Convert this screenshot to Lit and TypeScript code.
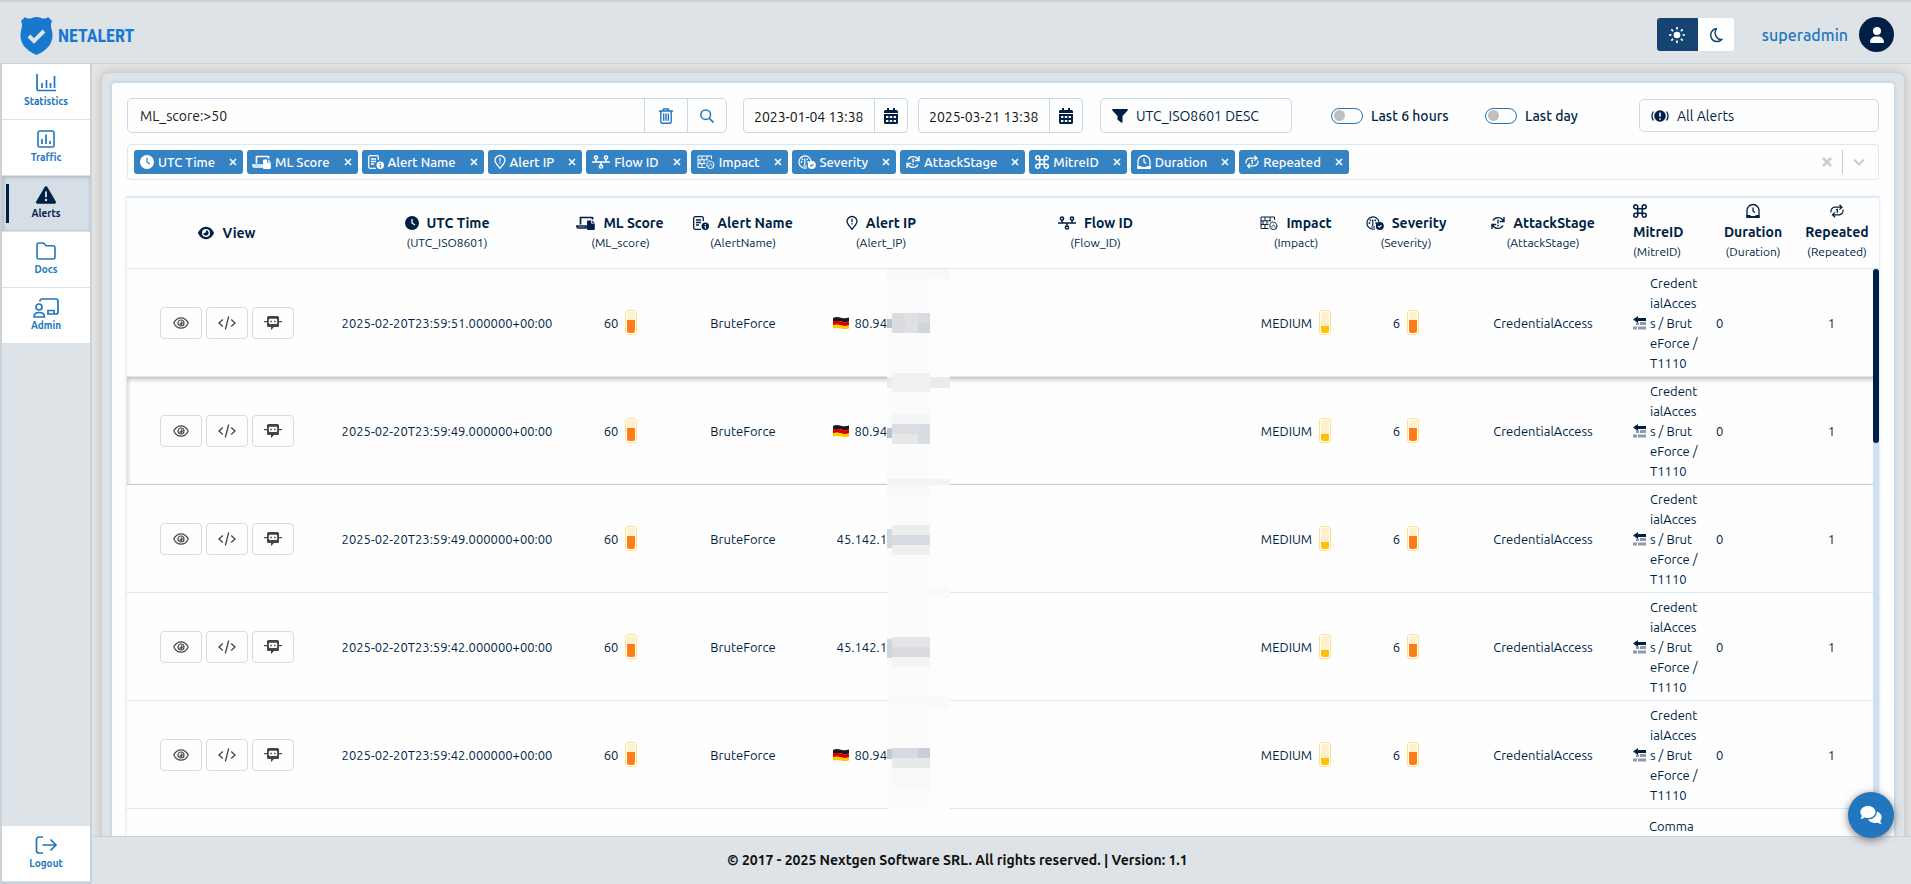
import { LitElement, html, css, svg, nothing } from "lit";
import type { TemplateResult } from "lit";
import { customElement, state } from "lit/decorators.js";
import { classMap } from "lit/directives/class-map.js";

interface Icon { box: string; w: number; h: number; body: TemplateResult; }

const line = (w: number, h: number, body: TemplateResult, box = `0 0 ${w} ${h}`): Icon => ({ box, w, h, body });

const ICONS: Record<string, Icon> = {
  shield: line(33, 38, svg`<path fill="currentColor" d="M5 0c2 2 5 2 7.500.7C13.500.2 15 0 16.500 0s3 .2 4 .7C23 2 26 2 28 0l4 4c-1.700 3-1 6-.2 9 3.200 12-4 20-15.300 25C5.200 33 -2 25 1.200 13 2 10 2.700 7 1 4z"/><path fill="none" stroke="#dee3e7" stroke-width="4" d="M9 19l5 5 10-10"/>`),
  stats: line(20, 18, svg`<path d="M1 0v14.500a2 2 0 0 0 2 2h17M6 14V9M10.500 14V6M14.500 14V9M18.500 14V2" fill="none" stroke="currentColor" stroke-width="1.700"/>`),
  traffic: line(18, 18, svg`<rect x="1" y="1" width="16" height="16" rx="2" fill="none" stroke="currentColor" stroke-width="1.600"/><path d="M5 14V9M9 14V4.500M13 14v-3" fill="none" stroke="currentColor" stroke-width="1.700"/>`),
  warning: line(20, 18, svg`<path fill="currentColor" d="M256 32c14.200 0 27.300 7.500 34.500 19.800l216 368c7.300 12.400 7.300 27.700 .2 40.100S486.300 480 472 480L40 480c-14.300 0-27.600-7.700-34.700-20.100s-7-27.800 .2-40.100l216-368C228.700 39.500 241.800 32 256 32zm0 128c-13.300 0-24 10.700-24 24l0 112c0 13.300 10.700 24 24 24s24-10.700 24-24l0-112c0-13.300-10.700-24-24-24zm32 224a32 32 0 1 0 -64 0 32 32 0 1 0 64 0z"/>`, "0 32 512 448"),
  folder: line(20, 18, svg`<path d="M1 3a2 2 0 0 1 2-2h4.500l2.500 2.700h7a2 2 0 0 1 2 2V15a2 2 0 0 1-2 2H3a2 2 0 0 1-2-2z" fill="none" stroke="currentColor" stroke-width="1.600"/>`),
  admin: line(26, 20, svg`<g fill="none" stroke="currentColor" stroke-width="1.700"><circle cx="6" cy="9" r="3"/><path d="M1 19c0-3 1.500-4.500 5-4.500s5.500 1.500 5.500 4.500zM7 3.500V3a2 2 0 0 1 2-2h14a2 2 0 0 1 2 2v11a2 2 0 0 1-2 2h-9M15 16v-3.500h6V16"/></g>`),
  logout: line(22, 18, svg`<path d="M8 1H4a2.500 2.500 0 0 0-2.500 2.500v11A2.500 2.500 0 0 0 4 17h4M7.500 9H21M15.500 3.500L21 9l-5.500 5.500" fill="none" stroke="currentColor" stroke-width="1.700"/>`),
  sun: line(16, 16, svg`<circle cx="8" cy="8" r="3.300" fill="currentColor"/><path d="M8 0v2.500M8 13.500V16M0 8h2.500M13.500 8H16M2.300 2.300l1.800 1.800M11.900 11.900l1.800 1.800M2.300 13.700l1.800-1.800M11.900 4.100l1.800-1.800" stroke="currentColor" stroke-width="1.700"/>`),
  moon: line(14, 14, svg`<path d="M7.500.8A6.400 6.400 0 1 0 13 11.200 4.500 4.500 0 0 1 8 9.500C5.500 7 5.500 3 7.500.8z" fill="none" stroke="currentColor" stroke-width="1.500" stroke-linejoin="round"/>`),
  user: line(14, 16, svg`<path fill="currentColor" d="M224 256A128 128 0 1 0 224 0a128 128 0 1 0 0 256zm-45.700 48C79.800 304 0 383.800 0 482.300C0 498.700 13.300 512 29.700 512l388.600 0c16.400 0 29.700-13.300 29.700-29.700C448 383.800 368.200 304 269.700 304l-91.400 0z"/>`, "0 0 448 512"),
  trash: line(14, 16, svg`<path d="M0 3h14M4.500 3V1h5v2M1.800 3v10.700A1.500 1.500 0 0 0 3.300 15.200h7.400a1.500 1.500 0 0 0 1.500-1.500V3M4.700 5.500v7.300M7 5.500v7.300M9.300 5.500v7.300" fill="none" stroke="currentColor" stroke-width="1.400"/>`),
  search: line(14, 14, svg`<circle cx="5.700" cy="5.700" r="4.800" fill="none" stroke="currentColor" stroke-width="1.500"/><path d="M9.300 9.300L13.500 13.500" stroke="currentColor" stroke-width="1.700"/>`),
  calendar: line(14, 16, svg`<path fill="currentColor" d="M3 0h2v2h4V0h2v2h1.500A1.500 1.500 0 0 1 14 3.500V5H0V3.500A1.500 1.500 0 0 1 1.500 2H3zM0 6h14v8.500a1.500 1.500 0 0 1-1.500 1.500h-11A1.500 1.500 0 0 1 0 14.500z"/><path fill="#fff" d="M2 8h2.400v2H2zM5.800 8h2.400v2H5.800zM9.600 8H12v2H9.600zM2 12h2.400v2H2zM5.800 12h2.400v2H5.800zM9.600 12H12v2H9.600z"/>`),
  funnel: line(16, 14, svg`<path fill="currentColor" d="M.8 0h14.400a.8.8 0 0 1 .6 1.300L10.500 7v6.200a.6.600 0 0 1-1 .5L5.900 11a1 1 0 0 1-.4-.8V7L.2 1.300A.8.800 0 0 1 .8 0z"/>`),
  alertAll: line(18, 14, svg`<circle cx="9" cy="7" r="5.800" fill="currentColor"/><path d="M9 3.500v4.300M9 9.200v1.600" stroke="#fff" stroke-width="1.500"/><path d="M2.500 2.500a8 8 0 0 0 0 9M15.500 2.500a8 8 0 0 1 0 9" fill="none" stroke="currentColor" stroke-width="1.300"/>`),
  eyeSolid: line(16, 14, svg`<path fill="currentColor" d="M288 32c-80.800 0-145.500 36.800-192.600 80.600C48.600 156 17.300 208 2.500 243.700c-3.300 7.900-3.300 16.700 0 24.600C17.300 304 48.600 356 95.400 399.400C142.500 443.200 207.200 480 288 480s145.500-36.800 192.600-80.600c46.800-43.500 78.100-95.400 93-131.100c3.300-7.900 3.300-16.700 0-24.600c-14.900-35.700-46.200-87.700-93-131.100C433.500 68.800 368.800 32 288 32zM144 256a144 144 0 1 1 288 0 144 144 0 1 1 -288 0zm144-64c0 35.300-28.700 64-64 64c-7.100 0-13.900-1.200-20.300-3.300c-5.500-1.800-11.900 1.600-11.700 7.400c.3 6.900 1.300 13.800 3.200 20.700c13.700 51.200 66.400 81.600 117.600 67.900s81.600-66.400 67.900-117.600c-11.100-41.500-47.800-69.400-88.600-71.100c-5.800-.2-9.200 6.100-7.400 11.700c2.100 6.400 3.300 13.200 3.300 20.300z"/>`, "0 32 576 448"),
  eye: line(16, 12, svg`<g fill="none" stroke="currentColor" stroke-width="1.200"><path d="M.8 6C2.500 2.500 5 .8 8 .8s5.500 1.700 7.200 5.200C13.500 9.500 11 11.200 8 11.200S2.500 9.500.8 6z"/><circle cx="8" cy="6" r="3"/></g><path d="M7.800 4.200a1.900 1.900 0 1 1-1.700 2.600c1 .2 2-.8 1.700-2.600z" fill="currentColor"/>`),
  code: line(18, 14, svg`<path d="M4.800 3.500L1 7l3.800 3.500M13.200 3.500L17 7l-3.800 3.500M10.700.5L7.300 13.500" fill="none" stroke="currentColor" stroke-width="1.300"/>`),
  bot: line(18, 14, svg`<path fill="currentColor" d="M4.500 0h9A1.500 1.500 0 0 1 15 1.500V5h3v1.300h-3V9.500a1.500 1.500 0 0 1-1.500 1.500H10l-3 3v-3H4.500A1.500 1.500 0 0 1 3 9.500V6.300H0V5h3V1.500A1.500 1.500 0 0 1 4.500 0z"/><rect x="4.800" y="2.800" width="8.400" height="5.200" rx="1.200" fill="#fff"/><path d="M6.300 4.700h1.500v1.500H6.300zM10.200 4.700h1.500v1.500h-1.500z" fill="currentColor"/>`),
  clock: line(14, 14, svg`<path fill="currentColor" d="M256 0a256 256 0 1 1 0 512A256 256 0 1 1 256 0zM232 120l0 136c0 8 4 15.500 10.700 20l96 64c11 7.400 25.900 4.400 33.300-6.700s4.400-25.900-6.700-33.300L280 243.200 280 120c0-13.300-10.700-24-24-24s-24 10.700-24 24z"/>`, "0 0 512 512"),
  score: line(18, 14, svg`<path d="M3.500 8.500V1.500h12M0 10h9v2H1.500A1.500 1.500 0 0 1 0 10.500zM15.500 1v2.500" fill="none" stroke="currentColor" stroke-width="1.700"/><path fill="currentColor" d="M11 4.500h3.200v3h3.600v5.500a1 1 0 0 1-1 1H11a1 1 0 0 1-1-1V5.500a1 1 0 0 1 1-1zM15.200 4.300l2.500 2.400h-2.500z"/>`),
  name: line(16, 14, svg`<path d="M8 13.300H2.200A1.500 1.500 0 0 1 .7 11.800V2.200A1.500 1.500 0 0 1 2.200.7h6.600a1.500 1.500 0 0 1 1.500 1.500V5M3 4h5M3 6.500h5M3 9h3" fill="none" stroke="currentColor" stroke-width="1.300"/><circle cx="12.300" cy="10.200" r="3.700" fill="currentColor"/><path d="M12.300 8v1M12.300 9.800v2.600" stroke="var(--hole,#fff)" stroke-width="1.200"/>`),
  ip: line(12, 14, svg`<path d="M6 13.300C3 9.500 1 7.600 1 5.500a5 5 0 0 1 10 0c0 2.100-2 4-5 7.800z" fill="none" stroke="currentColor" stroke-width="1.300"/><path d="M6 2.800v3.500M6 7.300v1.300" stroke="currentColor" stroke-width="1.300"/>`),
  flow: line(18, 14, svg`<g fill="none" stroke="currentColor" stroke-width="1.500"><circle cx="4" cy="2.500" r="1.600"/><circle cx="14" cy="2.500" r="1.600"/><circle cx="9" cy="11.500" r="1.600"/><path d="M0 7h18M4 4v3M14 4v3M9 7v3"/></g>`),
  impact: line(18, 14, svg`<g fill="none" stroke="currentColor" stroke-width="1"><path d="M8.500 12.500H1V1h13.500v3M1 4.800h10M1 8.600h7.500M5 1v3.800M10 1v3.800M3 4.800v3.800M7 4.800v3.800M5 8.600v3.900"/><path d="M13.500 13.500a3.600 3.600 0 0 1-3.700-3.700c0-1.500 1.200-2.800 2.200-4.300l1.500 1.300 1-.8c1.500 1.500 2.500 2.700 2.500 4.100a3.400 3.400 0 0 1-3.500 3.400zM11.800 11.500c0-1.200.7-1.800 1.700-2.500 1 .7 1.700 1.500 1.700 2.500"/></g>`),
  severity: line(18, 14, svg`<g fill="none" stroke="currentColor" stroke-width="1.200"><path d="M9 12.800A6.100 6.100 0 1 1 13 6M6.800 3.500V10M5 11h4"/></g><g fill="currentColor"><circle cx="3.500" cy="7" r=".9"/><circle cx="4.500" cy="4.300" r=".9"/><circle cx="9.300" cy="4.300" r=".9"/><circle cx="10.200" cy="7" r=".9"/><circle cx="13.800" cy="10" r="4"/></g><path d="M12.300 10l1.200 1.200 2-2.200" fill="none" stroke="var(--hole,#fff)" stroke-width="1.100"/>`),
  stage: line(14, 14, svg`<g fill="none" stroke="currentColor" stroke-width="1.400"><path d="M12.500 5.500A5.800 5.800 0 0 0 2 4.500M1.500 8.500A5.800 5.800 0 0 0 12 9.500M13 1v4.500H8.800M1 13V8.500h4.200M7 3.800v3.800M7 8.800v1.500"/></g>`),
  mitre: line(14, 14, svg`<path d="M4.700 4.700h4.600v4.600H4.700zM4.700 4.700H3a2 2 0 1 1 1.700-2zM9.300 4.700V3a2 2 0 1 1 1.700 1.700zM9.300 9.300H11a2 2 0 1 1-1.700 2zM4.700 9.300V11A2 2 0 1 1 3 9.300z" fill="none" stroke="currentColor" stroke-width="1.600"/>`),
  duration: line(14, 14, svg`<path d="M1 13V6.500a6 6 0 0 1 12 0V13z" fill="none" stroke="currentColor" stroke-width="1.300"/><path d="M.5 11h3.200a5.500 5.500 0 0 0 6.600 0h3.200v3H.5z" fill="currentColor"/><path d="M7 3.500V7l2 1.500" fill="none" stroke="currentColor" stroke-width="1.300"/>`),
  repeat: line(14, 14, svg`<path d="M1 8.500A4.300 4.300 0 0 1 4.500 3.200H12M9.500.8L12 3.200 9.500 5.600M13 5.500a4.300 4.300 0 0 1-3.500 5.300H2.500M5 8.400L2.500 10.800 5 13.200M6 5.800l1.300-.5V9" fill="none" stroke="currentColor" stroke-width="1.200"/>`),
  tactic: line(14, 14, svg`<path fill="currentColor" d="M0 3.500L5 0v2h8v3H5v2z"/><path fill="currentColor" opacity=".45" d="M7 6h6v3H7zM3 6.500h3v2.500H3zM0 10.500h4v3H0zM5 10.500h8v3H5z"/>`),
  chat: line(22, 18, svg`<path fill="currentColor" d="M8 0c4.200 0 7.500 2.700 7.500 6S12.200 12 8 12c-1.200 0-2.300-.2-3.300-.6-1 .8-2.500 1.400-4.400 1.400C1.200 11.800 1.700 10.700 1.800 9.700.9 8.700.4 7.400.4 6 .4 2.700 3.800 0 8 0z"/><path fill="currentColor" d="M16.800 5.500c2.900.8 4.900 3 4.900 5.700 0 1.400-.5 2.600-1.400 3.600 0 1 .6 2 1.500 3-1.900 0-3.400-.6-4.500-1.400-1 .4-2 .5-3.100.5-2.700 0-5-1.300-6.200-3.300 5 0 8.900-3.500 8.900-7.500z"/>`),
  flag: line(16, 12, svg`<path d="M0 1C3-.3 5 0 8 .8S13 1.500 16 .5V4.500c-3 1-5 .7-8 0S3 3.800 0 4.800z" fill="#1a1a1a"/><path d="M0 4.500c3-1 5-.8 8 0s5 1 8 0v4c-3 1-5 .8-8 0s-5-1-8 0z" fill="#d80000"/><path d="M0 8.300c3-1 5-.8 8 0s5 1 8 0v3.200c-3 1-5 .6-8 0s-5-.8-8 .2z" fill="#fc0"/>`),
  cross: line(8, 8, svg`<path d="M1 1l6 6M7 1L1 7" stroke="currentColor" stroke-width="1.600"/>`),
  clear: line(10, 10, svg`<path d="M1 1l8 8M9 1L1 9" stroke="currentColor" stroke-width="2.500"/>`),
  chevron: line(12, 8, svg`<path d="M1 1.500l5 5 5-5" fill="none" stroke="currentColor" stroke-width="2"/>`),
};

const icon = (name: string) => {
  const i = ICONS[name];
  return html`<svg class="icon" width=${i.w} height=${i.h} viewBox=${i.box} aria-hidden="true">${i.body}</svg>`;
};

interface Column { icon: string; title: string; field?: string; cls: string; }

const COLUMNS: Column[] = [
  { icon: "eyeSolid", title: "View", cls: "c-view" },
  { icon: "clock", title: "UTC Time", field: "UTC_ISO8601", cls: "c-time" },
  { icon: "score", title: "ML Score", field: "ML_score", cls: "c-score" },
  { icon: "name", title: "Alert Name", field: "AlertName", cls: "c-name" },
  { icon: "ip", title: "Alert IP", field: "Alert_IP", cls: "c-ip" },
  { icon: "flow", title: "Flow ID", field: "Flow_ID", cls: "c-flow" },
  { icon: "impact", title: "Impact", field: "Impact", cls: "c-level" },
  { icon: "severity", title: "Severity", field: "Severity", cls: "c-level" },
  { icon: "stage", title: "AttackStage", field: "AttackStage", cls: "c-stage" },
  { icon: "mitre", title: "MitreID", field: "MitreID", cls: "c-mitre" },
  { icon: "duration", title: "Duration", field: "Duration", cls: "c-duration" },
  { icon: "repeat", title: "Repeated", field: "Repeated", cls: "c-repeated" },
];

type Block = [x: number, y: number, w: number, h: number, fill: string];
interface Alert { time: string; ip: string; german: boolean; hover?: boolean; mask: Block[]; }

const BRUTE = ["Credent", "ialAcces", "s / Brut", "eForce /", "T1110"];

const ALERTS: Alert[] = [
  { time: "2025-02-20T23:59:51.000000+00:00", ip: "80.94", german: true,
    mask: [[0, 0, 63, 10, "#f7f8f9"], [0, 50, 5, 9, "#bcc1cc"], [5, 44, 13, 20, "#dadce1"], [18, 44, 13, 20, "#dfe0e3"], [31, 44, 12, 10, "#d9dbe1"], [31, 54, 12, 10, "#d0d4dd"], [5, 104, 38, 5, "#f1f1f1"]] },
  { time: "2025-02-20T23:59:49.000000+00:00", ip: "80.94", german: true, hover: true,
    mask: [[0, 0, 63, 11, "#ebebeb"], [5, 0, 38, 15, "#f1f1f1"], [0, 51, 5, 10, "#bdc3ce"], [5, 37, 38, 10, "#f4f5f7"], [5, 47, 26, 10, "#dbdde2"], [31, 47, 12, 20, "#d8dce3"], [5, 57, 26, 10, "#e7e7ea"], [0, 102, 63, 7, "#f4f4f5"]] },
  { time: "2025-02-20T23:59:49.000000+00:00", ip: "45.142.1", german: false,
    mask: [[0, 0, 43, 10, "#f7f8f8"], [0, 44, 5, 19, "#d5d7dc"], [5, 40, 38, 10, "#ededf0"], [5, 50, 38, 10, "#d8dbe2"], [5, 60, 38, 10, "#eff0f1"], [0, 103, 63, 6, "#f9fafc"]] },
  { time: "2025-02-20T23:59:42.000000+00:00", ip: "45.142.1", german: false,
    mask: [[0, 0, 63, 5, "#f9fafc"], [0, 46, 5, 19, "#d3d5db"], [5, 44, 38, 10, "#e3e4e8"], [5, 54, 38, 10, "#dadbe1"], [5, 64, 38, 10, "#f4f4f6"], [0, 103, 63, 6, "#f9fafc"]] },
  { time: "2025-02-20T23:59:42.000000+00:00", ip: "80.94", german: true,
    mask: [[0, 0, 63, 7, "#f9fafc"], [0, 48, 5, 10, "#c3c8d2"], [5, 47, 26, 10, "#d6d9e0"], [31, 47, 12, 10, "#c8ced9"], [5, 57, 38, 10, "#e7e9eb"], [5, 67, 38, 20, "#f9f9f9"]] },
];

const NAV = [
  { icon: "stats", label: "Statistics" },
  { icon: "traffic", label: "Traffic" },
  { icon: "warning", label: "Alerts" },
  { icon: "folder", label: "Docs" },
  { icon: "admin", label: "Admin" },
];

@customElement("app-root")
export class AppRoot extends LitElement {
  @state() private active = "Alerts";
  @state() private tags = COLUMNS.filter((c) => c.field);

  static styles = css`
    :host {
      --navy: #001f45; --blue: #2176bd; --panel: #dee3e7; --edge: #c8d2da; --rule: #d8e8f4; --ring: #c3d9ec;
      display: flex; flex-direction: column; height: 100vh; overflow: hidden;
      font-family: Ubuntu, "Noto Sans", sans-serif; font-size: 13px; line-height: 20px; color: var(--navy);
      background: #e6e6e6;
    }
    * { box-sizing: border-box; }
    button, input, select { font: inherit; color: inherit; margin: 0; }
    button { cursor: pointer; padding: 0; border: 0; background: none; display: flex; align-items: center; justify-content: center; }
    .icon { display: block; flex: none; overflow: visible; }

    .top { flex: none; height: 64px; display: flex; align-items: center; justify-content: space-between; padding: 4px 17px 0 20px; background: var(--panel); border-top: 2px solid #cdcfd0; border-bottom: 1px solid var(--edge); }
    .brand { display: flex; align-items: center; gap: 5px; padding-top: 2px; color: #1878d0; text-decoration: none; font-family: "Ubuntu Condensed", "Roboto Condensed", "Open Sans Condensed", Ubuntu, sans-serif; font-size: 18px; font-weight: 700; line-height: 24px; }
    .account { display: flex; align-items: center; }
    .theme { display: flex; border-radius: 3px; overflow: hidden; background: #fff; margin-right: 28px; }
    .theme button { width: 36px; height: 33px; color: #154472; }
    .theme .on { width: 41px; background: #154472; color: #fff; }
    .who { color: var(--blue); font-size: 16px; font-weight: 500; text-decoration: none; margin-right: 11px; }
    .avatar { width: 35px; height: 35px; border-radius: 50%; background: var(--navy); color: #fff; }

    .body { flex: 1; min-height: 0; display: flex; }
    .side { flex: none; width: 92px; display: flex; flex-direction: column; justify-content: space-between; background: var(--panel); border: 2px solid var(--edge); border-top: 0; }
    .nav { display: flex; flex-direction: column; }
    .item { height: 56px; display: flex; flex-direction: column; align-items: center; justify-content: space-between; padding: 10px 0 9px; background: #fff; border-bottom: 1px solid #dfe2e5; color: var(--blue); font-size: 10px; font-weight: 700; line-height: 16px; text-decoration: none; position: relative; }
    .item.current { background: #d6dee6; color: var(--navy); box-shadow: inset 1px 1px 4px #a9b2bc; }
    .item.current::before { content: ""; position: absolute; left: 4px; top: 8px; bottom: 8px; width: 3px; background: var(--navy); }

    .main { flex: 1; min-width: 0; display: flex; flex-direction: column; }
    .stage { flex: 1; min-height: 0; overflow: hidden; padding: 8px 6px 0 9px; }
    .frame { height: calc(100% + 40px); padding: 9px; background: var(--panel); border: 1px solid var(--edge); border-radius: 8px; box-shadow: 0 0 12px #bdbdbd; }
    .card { height: 100%; padding: 15px; background: #fefefe; border: 1px solid var(--ring); border-radius: 4px; box-shadow: 0 0 3px #b4cee4; display: flex; flex-direction: column; }
    .foot { flex: none; height: 48px; display: flex; align-items: center; justify-content: center; padding: 0 88px 2px 0; background: var(--panel); border-top: 1px solid var(--edge); font-size: 14px; font-weight: 700; color: #111; }

    .filters { display: flex; align-items: center; }
    .query { flex: 1; min-width: 160px; display: flex; height: 35px; border: 1px solid var(--ring); border-radius: 5px; overflow: hidden; }
    .query input { flex: 1; min-width: 0; border: 0; padding: 0 12px; background: none; font-size: 14px; color: #222; }
    .query button { width: 43px; border-left: 1px solid var(--ring); color: var(--blue); }
    .query button:last-child { width: 39px; }
    .dates { display: flex; gap: 10px; margin: 0 17px 0 16px; }
    .date { display: flex; width: 165px; height: 35px; border: 1px solid var(--ring); border-radius: 4px; }
    .date input { flex: 1; min-width: 0; border: 0; padding: 2px 0 0 10px; background: none; font-size: 14px; color: #111; }
    .date button { width: 33px; border-left: 1px solid var(--ring); color: var(--navy); }
    .pick { display: flex; align-items: center; height: 35px; border: 1px solid var(--ring); border-radius: 5px; padding-left: 11px; }
    .pick select { flex: 1; min-width: 0; height: 100%; border: 0; background: none; appearance: none; padding: 0 8px; font-size: 14px; }
    .sort { width: 192px; margin-right: 39px; }
    .scope { width: 240px; height: 33px; border-color: #ced8e2; }
    .toggle { width: 154px; display: flex; align-items: center; gap: 8px; font-size: 14px; font-weight: 500; }
    .toggle input { appearance: none; width: 32px; height: 16px; border: 1px solid var(--blue); border-radius: 8px; padding: 2px; display: flex; align-items: center; }
    .toggle input::before { content: ""; width: 11px; height: 11px; border-radius: 50%; background: #bfbfbf; }
    .toggle input:checked { justify-content: flex-end; }

    .tagbox { display: flex; align-items: center; justify-content: space-between; margin-top: 11px; min-height: 36px; padding: 5px 0 5px 6px; border: 1px solid var(--rule); border-radius: 4px; }
    .tags { display: flex; flex-wrap: wrap; gap: 4px; list-style: none; margin: 0; padding: 0; }
    .tag { --hole: #3683c3; display: flex; align-items: center; gap: 4px; height: 24px; padding-left: 6px; border-radius: 3px; background: #3683c3; color: #fff; font-weight: 500; }
    .tag button { width: 24px; height: 24px; padding-left: 4px; }
    .tools { display: flex; align-items: center; color: #ccc; }
    .tools button { width: 30px; height: 24px; }
    .tools button + button { width: 36px; padding-right: 4px; border-left: 1px solid #ccc; }

    .grid { flex: 1; min-height: 0; overflow: hidden; position: relative; margin-top: 17px; border-top: 1px solid var(--rule); box-shadow: 0 0 0 1px #e2eef8, 0 0 4px #cfe2f2; }
    table { width: 100%; border-collapse: separate; border-spacing: 0; table-layout: fixed; text-align: center; }
    th, td { padding: 4px 0; border-bottom: 1px solid var(--rule); }
    th { height: 71px; padding: 0; font-size: 14px; font-weight: 700; }
    .head { display: flex; align-items: center; justify-content: center; gap: 8px; }
    .field { display: block; font-size: 12px; font-weight: 400; }
    .c-view { width: 200px; } .c-time { width: 240px; } .c-score { width: 107px; } .c-name { width: 138px; } .c-ip { width: 138px; }
    .c-level { width: 110px; } .c-stage { width: 164px; } .c-mitre { width: 86px; } .c-duration { width: 84px; } .c-repeated { width: 84px; }
    .c-mitre .head, .c-duration .head, .c-repeated .head { flex-direction: column; gap: 4px; }
    th.c-mitre { text-align: left; padding-left: 8px; }
    .c-mitre .head { align-items: flex-start; }
    tr { position: relative; }
    tr.hover { box-shadow: inset 0 2px 5px #b5b5b5; }
    tr.hover td { border-bottom-color: #bccddb; }
    .acts { display: flex; justify-content: center; gap: 4px; }
    .acts button { width: 42px; height: 32px; border: 1px solid #d7dbe4; border-radius: 4px; color: #444; background: #fefefe; }
    .meter { display: flex; align-items: center; justify-content: center; gap: 7px; }
    .tube { width: 12px; height: 25px; padding: 1px; border: 1px solid #ffe08c; border-radius: 3px; display: flex; }
    .tube i { flex: 1; border-radius: 2px; background: linear-gradient(to top, #fd7e14 60%, #fff0cb 60%); }
    .tube.low i { background: linear-gradient(to top, #ffc107 32%, #fff0cb 32%); }
    td.c-ip { position: relative; padding: 0 63px 0 0; }
    .addr { display: flex; align-items: center; justify-content: flex-end; gap: 5px; }
    .mask { position: absolute; right: 0; top: 0; }
    .tech { display: flex; align-items: center; gap: 3px; padding-left: 8px; text-align: left; white-space: nowrap; height: 99px; }
    .next { padding: 7px 0 0 24px; text-align: left; vertical-align: top; height: 108px; }
    td.c-duration { text-align: left; padding-left: 5px; }
    td.c-repeated { padding-right: 11px; }
    .track { position: absolute; right: 0; top: 71px; bottom: 0; width: 6px; background: #cfe0f0; border-radius: 3px; }
    .thumb { height: 174px; border-radius: 3px; background: var(--navy); }
    .chat { position: fixed; right: 17px; bottom: 46px; width: 46px; height: 46px; border-radius: 50%; background: var(--blue); color: #fff; box-shadow: 0 2px 8px #777; }
  `;

  private navItem(i: { icon: string; label: string }) {
    const current = i.label === this.active;
    return html`<a class=${classMap({ item: true, current })} href="#${i.label.toLowerCase()}"
      aria-current=${current ? "page" : nothing} @click=${() => (this.active = i.label)}>${icon(i.icon)}<span>${i.label}</span></a>`;
  }

  private tag(c: Column) {
    return html`<li class="tag">${icon(c.icon)}<span>${c.title}</span>
      <button aria-label="Remove ${c.title}" @click=${() => (this.tags = this.tags.filter((t) => t !== c))}>${icon("cross")}</button></li>`;
  }

  private date(label: string, value: string) {
    return html`<div class="date"><input type="text" aria-label=${label} .value=${value}><button aria-label="Open ${label} calendar">${icon("calendar")}</button></div>`;
  }

  private row(a: Alert) {
    return html`<tr class=${a.hover ? "hover" : ""}>
      <td><div class="acts"><button aria-label="View">${icon("eye")}</button><button aria-label="Source">${icon("code")}</button><button aria-label="Assistant">${icon("bot")}</button></div></td>
      <td>${a.time}</td>
      <td><div class="meter">60<span class="tube"><i></i></span></div></td>
      <td>BruteForce</td>
      <td class="c-ip"><div class="addr">${a.german ? icon("flag") : nothing}<span>${a.ip}</span></div>
        <svg class="mask" width="63" height="108" aria-hidden="true"><path d="M0 0h63v109H0z" fill="#fdfdfd"/><path d="M0 0h43v109H0z" fill="#fbfbfb"/>${a.mask.map(([x, y, w, h, f]) => svg`<rect x=${x} y=${y} width=${w} height=${h} fill=${f}/>`)}</svg></td>
      <td></td>
      <td><div class="meter">MEDIUM<span class="tube low"><i></i></span></div></td>
      <td><div class="meter">6<span class="tube"><i></i></span></div></td>
      <td>CredentialAccess</td>
      <td class="c-mitre"><div class="tech">${icon("tactic")}<span>${BRUTE.map((l, n) => html`${n ? html`<br>` : nothing}${l}`)}</span></div></td>
      <td class="c-duration">0</td>
      <td class="c-repeated">1</td>
    </tr>`;
  }

  render() {
    return html`
      <header class="top">
        <a class="brand" href="#home">${icon("shield")}<span>NETALERT</span></a>
        <div class="account">
          <div class="theme"><button class="on" aria-label="Light theme">${icon("sun")}</button><button aria-label="Dark theme">${icon("moon")}</button></div>
          <a class="who" href="#profile">superadmin</a>
          <button class="avatar" aria-label="Account">${icon("user")}</button>
        </div>
      </header>
      <div class="body">
        <nav class="side">
          <div class="nav">${NAV.map((i) => this.navItem(i))}</div>
          ${this.navItem({ icon: "logout", label: "Logout" })}
        </nav>
        <div class="main">
          <main class="stage"><div class="frame"><section class="card">
            <div class="filters">
              <div class="query"><input type="text" aria-label="Query" value="ML_score:>50"><button aria-label="Clear query">${icon("trash")}</button><button aria-label="Search">${icon("search")}</button></div>
              <div class="dates">${this.date("From", "2023-01-04 13:38")}${this.date("To", "2025-03-21 13:38")}</div>
              <div class="pick sort">${icon("funnel")}<select aria-label="Sort"><option>UTC_ISO8601 DESC</option></select></div>
              <label class="toggle"><input type="checkbox" role="switch">Last 6 hours</label>
              <label class="toggle"><input type="checkbox" role="switch">Last day</label>
              <div class="pick scope">${icon("alertAll")}<select aria-label="Alert scope"><option>All Alerts</option></select></div>
            </div>
            <div class="tagbox">
              <ul class="tags">${this.tags.map((c) => this.tag(c))}</ul>
              <div class="tools"><button aria-label="Clear columns" @click=${() => (this.tags = [])}>${icon("clear")}</button><button aria-label="Choose columns">${icon("chevron")}</button></div>
            </div>
            <div class="grid">
              <table>
                <thead><tr>${COLUMNS.map((c) => html`<th scope="col" class=${c.cls}><span class="head">${icon(c.icon)}<span>${c.title}</span></span>${c.field ? html`<span class="field">(${c.field})</span>` : nothing}</th>`)}</tr></thead>
                <tbody>${ALERTS.map((a) => this.row(a))}<tr><td colspan="9"></td><td class="next">Comma</td><td colspan="2"></td></tr></tbody>
              </table>
              <div class="track"><div class="thumb"></div></div>
            </div>
          </section></div></main>
          <footer class="foot">© 2017 - 2025 Nextgen Software SRL. All rights reserved. | Version: 1.1</footer>
        </div>
      </div>
      <button class="chat" aria-label="Open chat">${icon("chat")}</button>`;
  }
}
